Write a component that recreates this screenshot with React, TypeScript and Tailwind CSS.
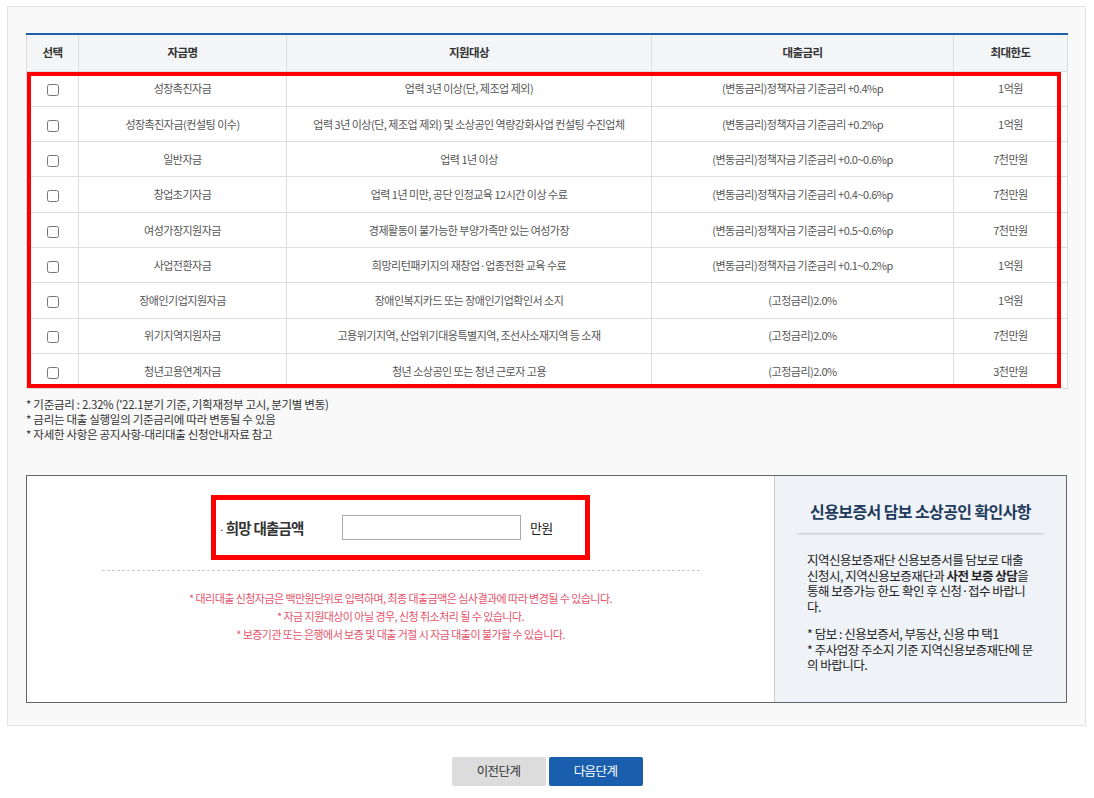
import React from 'react'

interface Fund {
  name:   string
  target: string
  rate:   string
  limit:  string
}

const funds: Fund[] = [
  { name: '성장촉진자금',              target: '업력 3년 이상(단, 제조업 제외)',                                    rate: '(변동금리)정책자금 기준금리 +0.4%p',     limit: '1억원' },
  { name: '성장촉진자금(컨설팅 이수)', target: '업력 3년 이상(단, 제조업 제외) 및 소상공인 역량강화사업 컨설팅 수진업체', rate: '(변동금리)정책자금 기준금리 +0.2%p',     limit: '1억원' },
  { name: '일반자금',                  target: '업력 1년 이상',                                                    rate: '(변동금리)정책자금 기준금리 +0.0~0.6%p', limit: '7천만원' },
  { name: '창업초기자금',              target: '업력 1년 미만, 공단 인정교육 12시간 이상 수료',                      rate: '(변동금리)정책자금 기준금리 +0.4~0.6%p', limit: '7천만원' },
  { name: '여성가장지원자금',          target: '경제활동이 불가능한 부양가족만 있는 여성가장',                        rate: '(변동금리)정책자금 기준금리 +0.5~0.6%p', limit: '7천만원' },
  { name: '사업전환자금',              target: '희망리턴패키지의 재창업·업종전환 교육 수료',                          rate: '(변동금리)정책자금 기준금리 +0.1~0.2%p', limit: '1억원' },
  { name: '장애인기업지원자금',        target: '장애인복지카드 또는 장애인기업확인서 소지',                           rate: '(고정금리)2.0%',                          limit: '1억원' },
  { name: '위기지역지원자금',          target: '고용위기지역, 산업위기대응특별지역, 조선사소재지역 등 소재',            rate: '(고정금리)2.0%',                          limit: '7천만원' },
  { name: '청년고용연계자금',          target: '청년 소상공인 또는 청년 근로자 고용',                                 rate: '(고정금리)2.0%',                          limit: '3천만원' },
]

const th = 'h-[37px] border-l border-[#dddddd] first:border-l-0 font-bold text-[11.5px] tracking-[-0.6px] text-[#333333] text-center'
const td = 'h-[35.3px] border-l border-t border-[#dddddd] first:border-l-0 text-[11px] tracking-[-0.5px] text-[#555555] text-center px-2'

export default function App() {
  return (
    <div className="min-h-[798px] bg-white font-['Noto_Sans_CJK_KR',sans-serif]">
      <div className="ml-[7px] mt-[6px] w-[1079px] border border-[#e3e3e3] bg-[#f9f9f9] px-[18px] pt-[26px] pb-[22px]">

        {/* fund table */}
        <div className="relative">
          <table className="w-full table-fixed border-collapse bg-white border-x border-b border-[#dddddd] border-t-2 border-t-[#1c5fae]">
            <colgroup>
              <col className="w-[52px]" />
              <col className="w-[208px]" />
              <col className="w-[365px]" />
              <col className="w-[302px]" />
              <col className="w-[114px]" />
            </colgroup>
            <thead className="bg-[#f4f5f7]">
              <tr>
                <th className={th}>선택</th>
                <th className={th}>자금명</th>
                <th className={th}>지원대상</th>
                <th className={th}>대출금리</th>
                <th className={th}>최대한도</th>
              </tr>
            </thead>
            <tbody>
              {funds.map(f => (
                <tr key={f.name}>
                  <td className={td}>
                    <input type="checkbox" className="w-[12px] h-[12px] align-middle accent-[#1c5fae]" />
                  </td>
                  <td className={td}>{f.name}</td>
                  <td className={`${td} whitespace-nowrap`}>{f.target}</td>
                  <td className={td}>{f.rate}</td>
                  <td className={td}>{f.limit}</td>
                </tr>
              ))}
            </tbody>
          </table>
          <div className="absolute top-[39px] left-[1px] right-[6px] bottom-[1px] border-4 border-[#ff0000] pointer-events-none" />
        </div>

        {/* notes */}
        <div className="mt-[8px] text-[11.5px] leading-[15px] tracking-[-0.3px] text-[#333333]">
          <p>* 기준금리 : 2.32% ('22.1분기 기준, 기획재정부 고시, 분기별 변동)</p>
          <p>* 금리는 대출 실행일의 기준금리에 따라 변동될 수 있음</p>
          <p>* 자세한 사항은 공지사항-대리대출 신청안내자료 참고</p>
        </div>

        {/* amount box */}
        <div className="mt-[33px] flex h-[228px] border border-[#666666] bg-white">
          <div className="flex-1 pt-[19px]">
            <div className="mx-auto flex h-[65px] w-[379px] items-center border-[5px] border-[#ff0000] pl-[3px]">
              <span className="w-[123px] text-[14.5px] font-bold tracking-[-0.8px] text-[#333333]">
                <span className="font-normal text-[10px] mr-[2px]">·</span>희망 대출금액
              </span>
              <input type="text" className="h-[25px] w-[179px] border border-[#aaaaaa] bg-white outline-none" />
              <span className="ml-[9px] text-[13px] tracking-[-0.8px] text-[#222222]">만원</span>
            </div>
            <div className="mx-auto mt-[10px] w-[598px] border-t border-dashed border-[#cccccc]" />
            <div className="mt-[18px] text-center text-[11px] leading-[18px] tracking-[-0.55px] text-[#e6536b]">
              <p>* 대리대출 신청자금은 백만원단위로 입력하며, 최종 대출금액은 심사결과에 따라 변경될 수 있습니다.</p>
              <p>* 자금 지원대상이 아닐 경우, 신청 취소처리 될 수 있습니다.</p>
              <p>* 보증기관 또는 은행에서 보증 및 대출 거절 시 자금 대출이 불가할 수 있습니다.</p>
            </div>
          </div>

          <div className="w-[292px] border-l border-[#cccccc] bg-[#eff3f7]">
            <div className="mx-[20px] pt-[25px] pb-[12px] text-center text-[16px] leading-[20px] font-bold tracking-[-0.6px] text-[#1e3a5c] shadow-[0_3px_2px_-2px_rgba(0,0,0,0.18)]">
              신용보증서 담보 소상공인 확인사항
            </div>
            <div className="mt-[19px] px-[32px] text-[12.5px] leading-[15.5px] tracking-[-0.5px] text-[#222222]">
              <p>
                지역신용보증재단 신용보증서를 담보로 대출<br />
                신청시, 지역신용보증재단과 <b>사전 보증 상담</b>을<br />
                통해 보증가능 한도 확인 후 신청·접수 바랍니<br />
                다.
              </p>
              <p className="mt-[12px]">
                * 담보 : 신용보증서, 부동산, 신용 中 택1<br />
                * 주사업장 주소지 기준 지역신용보증재단에 문<br />
                의 바랍니다.
              </p>
            </div>
          </div>
        </div>
      </div>

      {/* step buttons */}
      <div className="mt-[31px] flex justify-center gap-[3px]">
        <button className="h-[29px] w-[94px] rounded-[2px] bg-[#dcdcdc] text-[12.5px] tracking-[-0.6px] text-[#333333]">이전단계</button>
        <button className="h-[29px] w-[94px] rounded-[2px] bg-[#1a5fad] text-[12.5px] tracking-[-0.6px] text-white">다음단계</button>
      </div>
    </div>
  )
}
